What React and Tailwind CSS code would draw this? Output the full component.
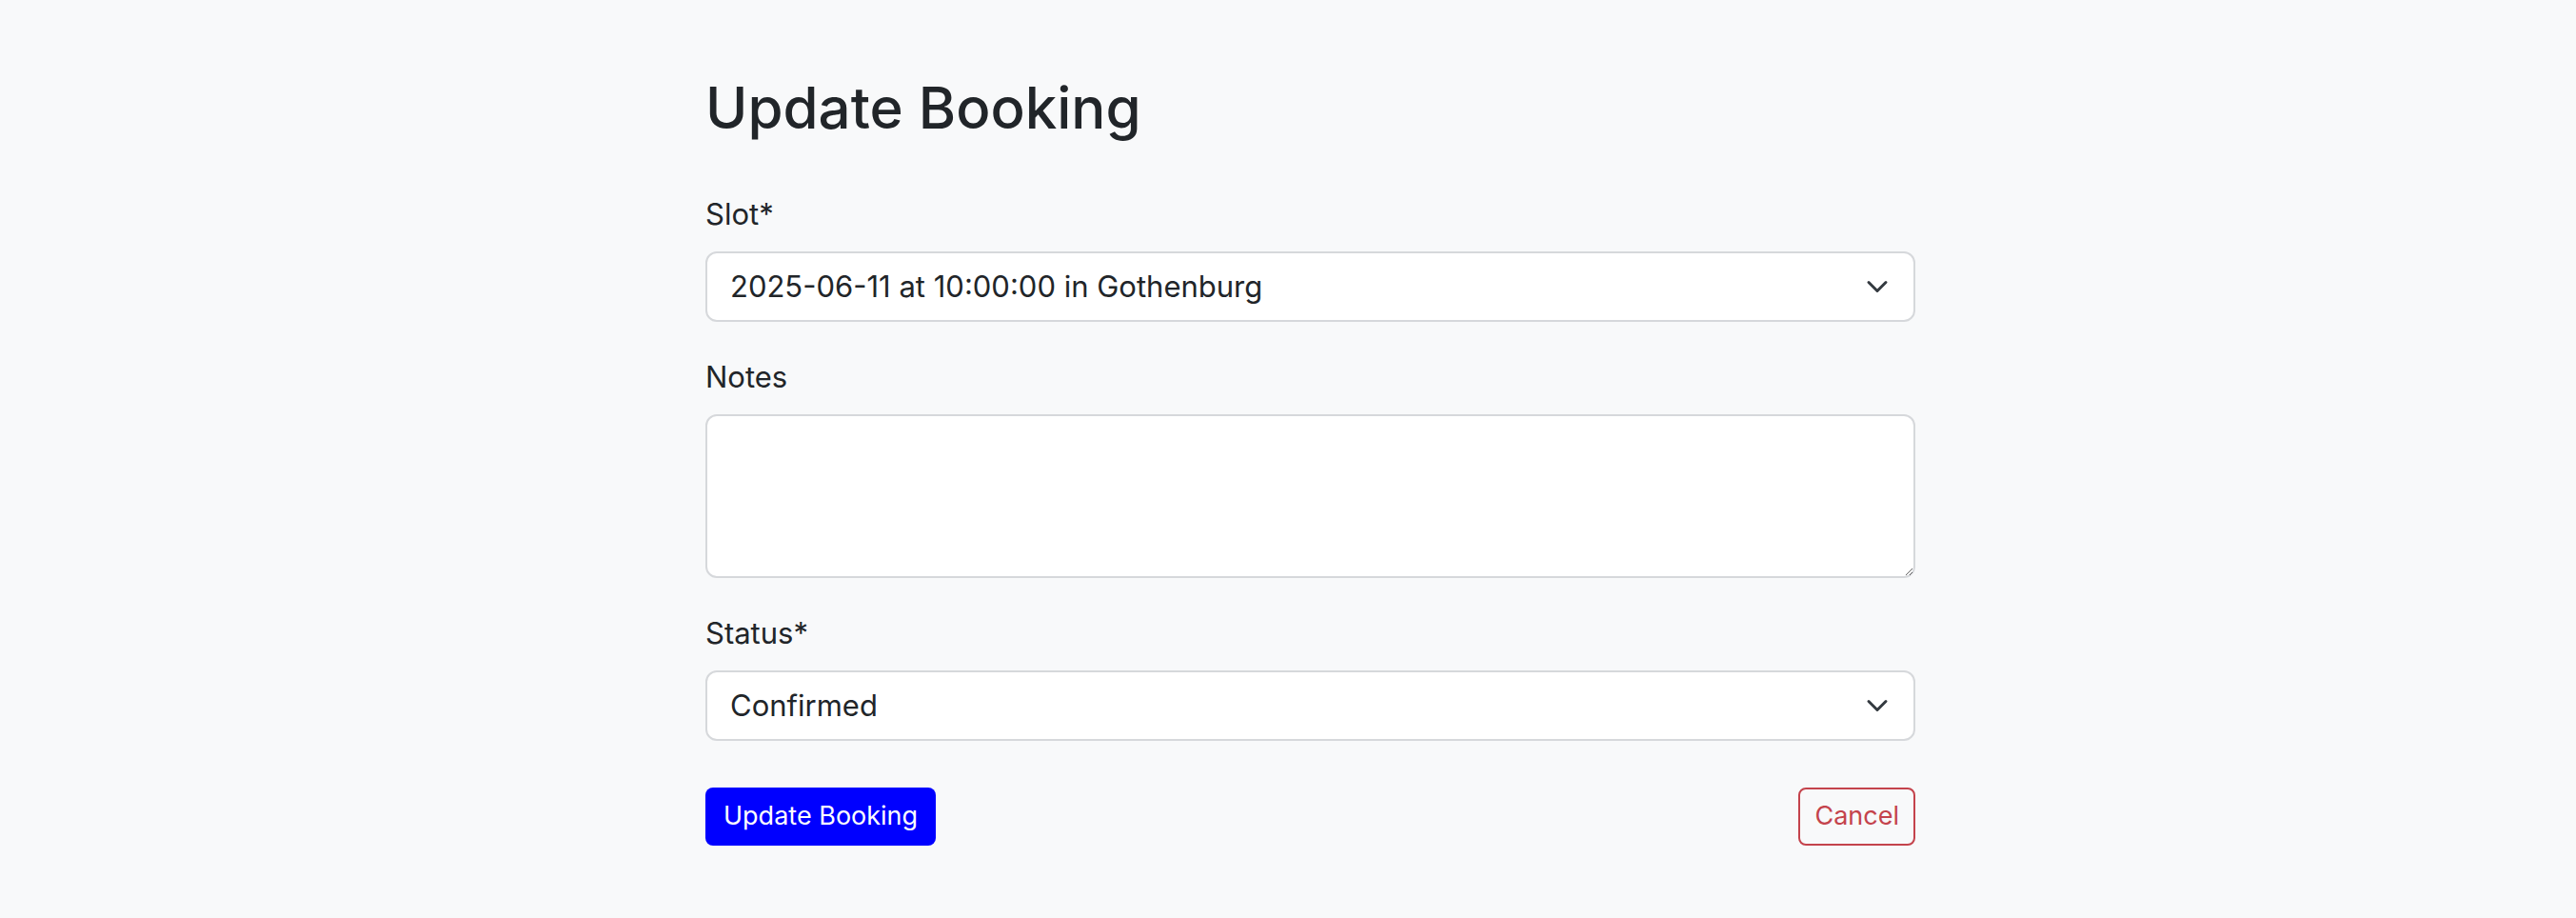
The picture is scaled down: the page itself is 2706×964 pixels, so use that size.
import React, { useState } from "react";

const Chevron = () => (
  <svg className="w-[24px] h-[24px] shrink-0" viewBox="0 0 16 16" fill="none">
    <path d="m2 5 6 6 6-6" stroke="#343a40" strokeWidth="2" strokeLinecap="round" strokeLinejoin="round" />
  </svg>
);

const FakeSelect = ({ value }) => (
  <div className="flex flex-row items-center h-[74px] bg-white border-2 border-[#d6d8db] rounded-[12px] pl-[24px] pr-[26px] text-[31px] text-[#212529] cursor-pointer">
    <span>{value}</span>
    <span className="ms-auto"></span>
    <Chevron />
  </div>
);

const Label = ({ children }) => <div className="text-[31px] leading-[47px] text-[#212529] mb-[16px]">{children}</div>;

const App = () => {
  const [notes, setNotes] = useState("");

  return (
    <div className="min-h-screen w-full bg-[#f8f9fa]" style={{ fontFamily: "Inter, 'Noto Sans', sans-serif" }}>
      <div className="ml-[741px] w-[1271px] pt-[77px]">
        <h2 className="text-[60px] leading-[72px] font-medium text-[#212529] mb-[52px]">Update Booking</h2>

        <div className="mb-[34px]">
          <Label>Slot*</Label>
          <FakeSelect value="2025-06-11 at 10:00:00 in Gothenburg" />
        </div>

        <div className="mb-[34px]">
          <Label>Notes</Label>
          <textarea
            value={notes}
            onChange={(e) => setNotes(e.target.value)}
            className="block w-full h-[172px] bg-white border-2 border-[#d6d8db] rounded-[12px] px-[24px] py-[12px] text-[31px] outline-none"
          />
        </div>

        <div className="mb-[49px]">
          <Label>Status*</Label>
          <FakeSelect value="Confirmed" />
        </div>

        <div className="flex flex-row items-center">
          <button className="h-[61px] px-[19px] rounded-[8px] bg-[#0000ff] text-white text-[27px]">Update Booking</button>
          <span className="ms-auto"></span>
          <button className="h-[61px] px-[15px] rounded-[8px] border-2 border-[#c4434c] text-[#c4434c] text-[27px]">Cancel</button>
        </div>
      </div>
    </div>
  );
};

export default App;
